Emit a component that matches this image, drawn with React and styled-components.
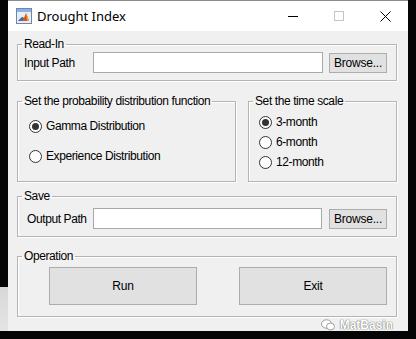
import React from "react";
import styled, { createGlobalStyle } from "styled-components";

const Global = createGlobalStyle`
  html, body { margin: 0; padding: 0; }
  body {
    width: 416px;
    height: 339px;
    overflow: hidden;
    background:
      linear-gradient(to bottom, transparent 0, transparent 287px, #d8d8d8 287px, #e4e4e4 331px, transparent 331px) 0 0 / 8px 339px no-repeat,
      #050505;
    font-family: "Liberation Sans", Arial, sans-serif;
  }
  #root { padding-left: 8px; }
`;

const Window = styled.div`
  width: 400px;
  height: 331px;
  display: flex;
  flex-direction: column;
  border-top: 1px solid #8c8c8c;
  box-sizing: border-box;
`;

const TitleBar = styled.div`
  height: 30px;
  flex: none;
  background: #ffffff;
  display: flex;
  align-items: center;
  padding-left: 8px;
`;

const Title = styled.span`
  font-family: "Noto Sans", "Open Sans", sans-serif;
  font-size: 13px;
  color: #000;
  margin-left: 5px;
  flex: 1;
`;

const Ctrl = styled.div`
  width: 46px;
  height: 30px;
  display: flex;
  align-items: center;
  justify-content: center;
`;

const Body = styled.div`
  flex: 1;
  min-height: 0;
  overflow: hidden;
  background: #f0f0f0;
  padding: 6px 11px 0 9px;
  display: flex;
  flex-direction: column;
`;

const Group = styled.fieldset`
  margin: ${(p) => p.$mt || 0}px 0 0 0;
  padding: 0 6px;
  border: 1px solid #b4b4b4;
  box-shadow: inset 1px 1px 0 #fff, 1px 1px 0 #fff;
  height: ${(p) => p.$h}px;
  box-sizing: border-box;
  min-width: 0;
  flex: ${(p) => (p.$grow ? "1 0 0" : "none")};
  width: ${(p) => (p.$w ? p.$w + "px" : "auto")};
`;

const Legend = styled.legend`
  font-size: 12px;
  letter-spacing: -0.4px;
  line-height: 14px;
  color: #000;
  padding: 0 2px;
  margin-left: -2px;
  white-space: nowrap;
`;

const Row = styled.div`
  display: flex;
  align-items: center;
  margin-top: ${(p) => p.$mt || 0}px;
`;

const Label = styled.span`
  font-size: 12px;
  letter-spacing: -0.4px;
  white-space: nowrap;
  color: #000;
  width: ${(p) => p.$w}px;
  padding-left: ${(p) => p.$pl || 0}px;
  box-sizing: border-box;
`;

const Field = styled.div`
  width: ${(p) => p.$w}px;
  height: 21px;
  background: #fff;
  border: 1px solid #a8a8a8;
  box-sizing: border-box;
`;

const Button = styled.div`
  width: ${(p) => p.$w}px;
  height: ${(p) => p.$h}px;
  margin-left: ${(p) => p.$ml || 0}px;
  background: #e1e1e1;
  border: 1px solid #adadad;
  box-sizing: border-box;
  display: flex;
  align-items: center;
  justify-content: center;
  font-size: 12px;
  letter-spacing: -0.2px;
  color: #000;
`;

const Split = styled.div`
  display: flex;
  flex: none;
  gap: 12px;
  margin-top: 13px;
`;

const RadioList = styled.div`
  display: flex;
  flex-direction: column;
  gap: ${(p) => p.$gap}px;
  padding-top: ${(p) => p.$pt}px;
  padding-left: ${(p) => p.$pl}px;
`;

const RadioItem = styled.div`
  display: flex;
  align-items: center;
  font-size: 12px;
  letter-spacing: -0.4px;
  white-space: nowrap;
  color: #000;
  height: 14px;
`;

const Circle = styled.span`
  width: 13px;
  height: 13px;
  border-radius: 50%;
  border: 1px solid #333;
  background: #fff;
  box-sizing: border-box;
  margin-right: 4px;
  display: flex;
  align-items: center;
  justify-content: center;
  &::after {
    content: "";
    width: 7px;
    height: 7px;
    border-radius: 50%;
    background: ${(p) => (p.$on ? "#333" : "transparent")};
  }
`;

const OpRow = styled.div`
  display: flex;
  justify-content: space-between;
  padding: 4px 3px 0 25px;
`;

const Footer = styled.div`
  display: flex;
  flex: none;
  justify-content: flex-end;
  align-items: center;
  gap: 5px;
  padding: 1px 4px 0 0;
  height: 14px;
  box-sizing: border-box;
  line-height: 12px;
  font-family: "Liberation Sans", Arial, sans-serif;
  font-size: 12px;
  font-weight: bold;
  color: #ffffff;
  text-shadow: 0 0 1px #666, 0 0 1px #666;
`;

const Radio = ({ on, children }) => (
  <RadioItem>
    <Circle $on={on} />
    {children}
  </RadioItem>
);

const AppIcon = () => (
  <svg width="16" height="16" viewBox="0 0 16 16">
    <rect x="0.5" y="0.5" width="15" height="15" fill="#e8eef6" stroke="#6b87b0" />
    <rect x="1" y="1" width="14" height="3" fill="#8fb0dd" />
    <path d="M2 13 L6 9 L8 10 L10 5 L13 13 Z" fill="#d9531e" />
    <path d="M2 13 L6 9 L8 10 L6 13 Z" fill="#3a70b5" />
    <path d="M10 5 L11.5 8 L13 13 L11 13 Z" fill="#f0a030" />
  </svg>
);

export default function App() {
  return (
    <>
      <Global />
      <Window>
        <TitleBar>
          <AppIcon />
          <Title>Drought Index</Title>
          <Ctrl>
            <svg width="10" height="10" viewBox="0 0 10 10">
              <line x1="0" y1="5.5" x2="10" y2="5.5" stroke="#000" strokeWidth="1" />
            </svg>
          </Ctrl>
          <Ctrl>
            <svg width="10" height="10" viewBox="0 0 10 10">
              <rect x="0.5" y="0.5" width="9" height="9" fill="none" stroke="#c4c4c4" strokeWidth="1" />
            </svg>
          </Ctrl>
          <Ctrl>
            <svg width="11" height="11" viewBox="0 0 11 11">
              <path d="M0.5 0.5 L10.5 10.5 M10.5 0.5 L0.5 10.5" stroke="#000" strokeWidth="1" />
            </svg>
          </Ctrl>
        </TitleBar>
        <Body>
          <Group $h={44}>
            <Legend>Read-In</Legend>
            <Row $mt={1}>
              <Label $w={69}>Input Path</Label>
              <Field $w={230} />
              <Button $w={58} $h={20} $ml={6}>Browse...</Button>
            </Row>
          </Group>
          <Split>
            <Group $w={219} $h={88}>
              <Legend>Set the probability distribution function</Legend>
              <RadioList $gap={16} $pt={11} $pl={5}>
                <Radio on>Gamma Distribution</Radio>
                <Radio>Experience Distribution</Radio>
              </RadioList>
            </Group>
            <Group $grow $h={88}>
              <Legend>Set the time scale</Legend>
              <RadioList $gap={6} $pt={7} $pl={4}>
                <Radio on>3-month</Radio>
                <Radio>6-month</Radio>
                <Radio>12-month</Radio>
              </RadioList>
            </Group>
          </Split>
          <Group $h={48} $mt={7}>
            <Legend>Save</Legend>
            <Row $mt={5}>
              <Label $w={69} $pl={3}>Output Path</Label>
              <Field $w={229} />
              <Button $w={58} $h={20} $ml={7}>Browse...</Button>
            </Row>
          </Group>
          <Group $h={68} $mt={12}>
            <Legend>Operation</Legend>
            <OpRow>
              <Button $w={148} $h={38}>Run</Button>
              <Button $w={148} $h={38}>Exit</Button>
            </OpRow>
          </Group>
          <Footer>
            <svg width="14" height="12" viewBox="0 0 14 12">
              <ellipse cx="5.5" cy="5" rx="5" ry="4.2" fill="#fff" stroke="#888" strokeWidth="0.8" />
              <ellipse cx="9.5" cy="7.5" rx="4" ry="3.4" fill="#fff" stroke="#888" strokeWidth="0.8" />
            </svg>
            MatBasin
          </Footer>
        </Body>
      </Window>
    </>
  );
}
